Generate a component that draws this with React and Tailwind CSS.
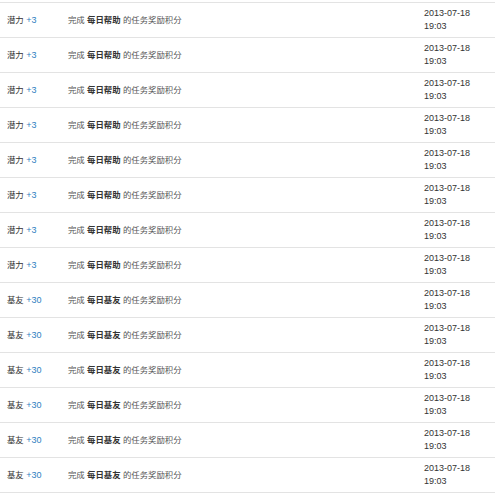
import React from "react";

const rows = [
  ...Array(8).fill({ label: "潜力", pts: "+3", task: "每日帮助" }),
  ...Array(6).fill({ label: "基友", pts: "+30", task: "每日基友" }),
];

export default function App() {
  return (
    <div
      className="w-[502px] h-[500px] bg-white pt-[2px]"
      style={{ fontFamily: '"Liberation Sans", "Noto Sans CJK SC", sans-serif' }}
    >
      <div className="w-[495px] border-b border-[#e3e3e3]">
        {rows.map((r, i) => (
          <div
            key={i}
            className="flex items-center h-[35px] border-t border-[#e3e3e3] text-[9px] leading-[13px]"
          >
            <div className="w-[68px] pl-[7px] text-[#333]">
              <span className="text-[8.4px]">{r.label}</span>{" "}
              <span className="text-[#2f7fc1]">{r.pts}</span>
            </div>
            <div className="w-[356px] text-[#555] text-[8.4px]">
              完成 <span className="font-bold text-[#333]">{r.task}</span> 的任务奖励积分
            </div>
            <div className="text-[#333]">
              2013-07-18
              <br />
              19:03
            </div>
          </div>
        ))}
      </div>
    </div>
  );
}
